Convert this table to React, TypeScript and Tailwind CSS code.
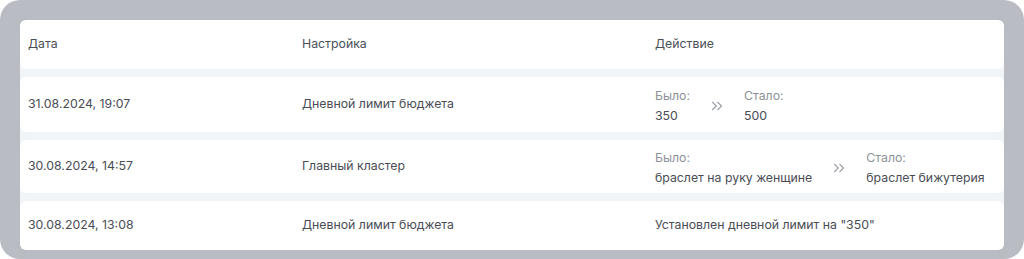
import { ChevronsRight } from "lucide-react";

type Change = { before: string; after: string };

type Row = {
  date: string;
  setting: string;
  change?: Change;
  note?: string;
  height: string;
};

const rows: Row[] = [
  {
    date: "31.08.2024, 19:07",
    setting: "Дневной лимит бюджета",
    change: { before: "350", after: "500" },
    height: "h-[55px]",
  },
  {
    date: "30.08.2024, 14:57",
    setting: "Главный кластер",
    change: { before: "браслет на руку женщине", after: "браслет бижутерия" },
    height: "h-[53px]",
  },
  {
    date: "30.08.2024, 13:08",
    setting: "Дневной лимит бюджета",
    note: 'Установлен дневной лимит на "350"',
    height: "h-[49px]",
  },
];

export default function App() {
  return (
    <div className="h-[259px] w-full bg-white font-['Inter',sans-serif] text-[12.3px]">
      <div className="h-full rounded-[20px] bg-[#b9bcc3] p-5 pb-2">
        <div className="flex flex-col gap-2 overflow-hidden rounded-md bg-[#f1f5f8]">
          {/* Header */}
          <div className="grid h-[49px] grid-cols-[274px_353px_1fr] items-center rounded-md bg-white pl-2 text-[#4b4f58]">
            <span>Дата</span>
            <span>Настройка</span>
            <span>Действие</span>
          </div>

          {rows.map((row) => (
            <div
              key={row.date}
              className={`grid ${row.height} grid-cols-[274px_353px_1fr] items-center rounded-md bg-white pl-2 text-[#4a4d55]`}
            >
              <span>{row.date}</span>
              <span>{row.setting}</span>
              {row.change ? (
                <ChangeCell change={row.change} />
              ) : (
                <span>{row.note}</span>
              )}
            </div>
          ))}
        </div>
      </div>
    </div>
  );
}

function ChangeCell({ change }: { change: Change }) {
  return (
    <div className="flex items-center gap-[18px] pt-0.5 leading-5">
      <div className="flex flex-col">
        <span className="text-[#8d9199]">Было:</span>
        <span>{change.before}</span>
      </div>
      <ChevronsRight className="h-[18px] w-[18px] text-[#9ca0a8]" strokeWidth={1.5} />
      <div className="flex flex-col">
        <span className="text-[#8d9199]">Стало:</span>
        <span>{change.after}</span>
      </div>
    </div>
  );
}
